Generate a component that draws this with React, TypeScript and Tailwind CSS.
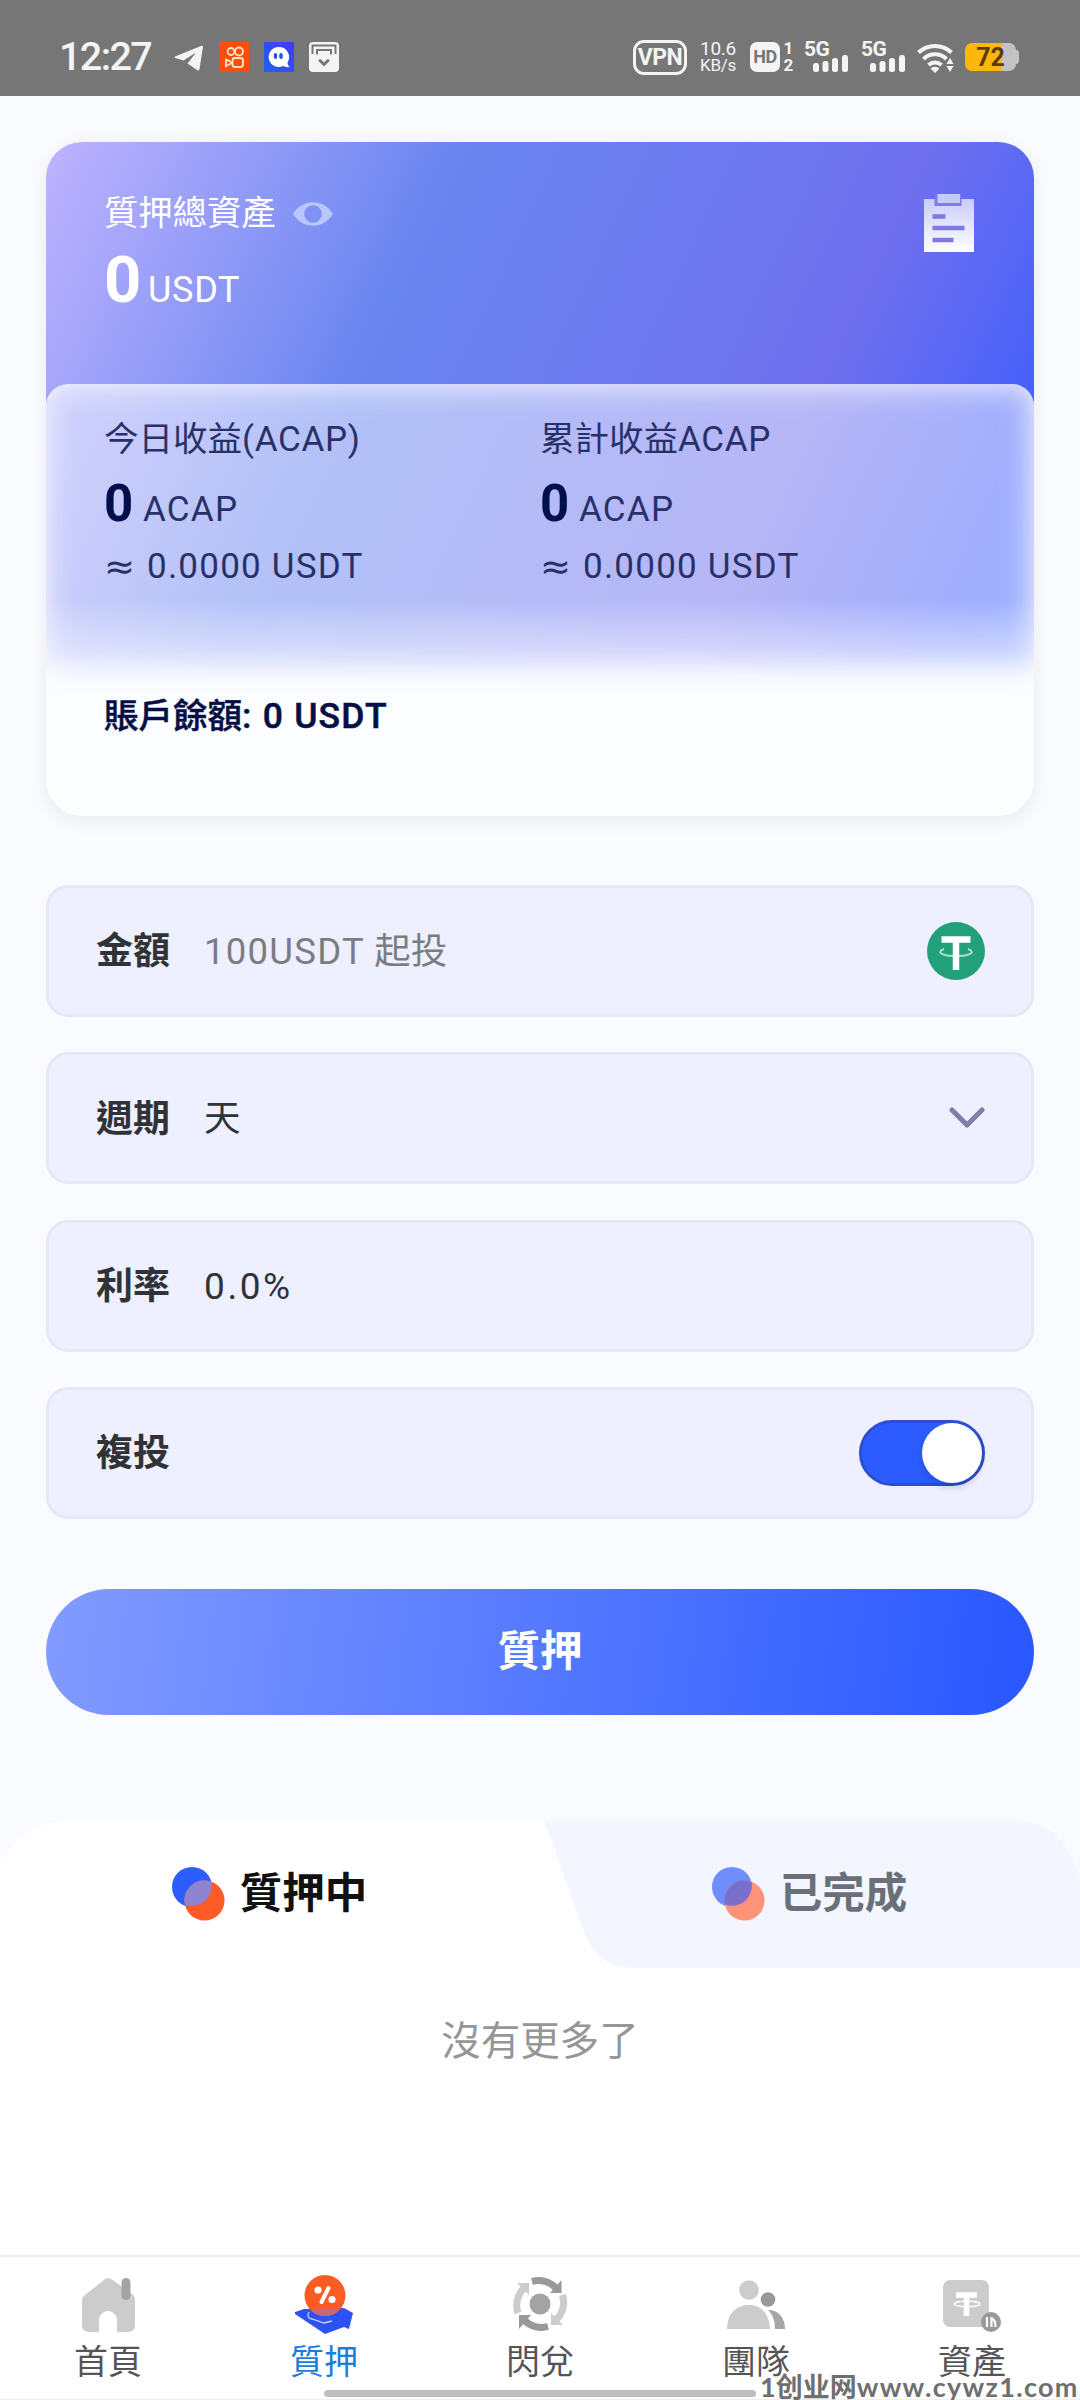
import { useState } from 'react';
import type { ReactNode } from 'react';

const FONT = 'font-[Roboto,"Noto_Sans_CJK_TC",sans-serif]';

/* ---------- status bar ---------- */

function SignalBars() {
  return (
    <div className="relative h-[30px] w-[45px]">
      <span className="absolute left-0 top-0 text-[21px] font-bold leading-[15px] -tracking-[0.5px]">5G</span>
      <svg className="absolute bottom-0 left-[9px]" width="36" height="17" viewBox="0 0 36 17" fill="#f4f4f4">
        <rect x="0" y="8" width="6" height="9" rx="2.5" />
        <rect x="9.5" y="6" width="6" height="11" rx="2.5" />
        <rect x="19" y="3" width="6" height="14" rx="2.5" />
        <rect x="29" y="0" width="6" height="17" rx="2.5" />
      </svg>
    </div>
  );
}

function StatusBar() {
  return (
    <div className="flex h-24 shrink-0 items-center bg-[#767676] pl-[59px] pr-[61px] pt-[18px] text-[#f4f4f4]">
      <span className="w-[115px] text-[39.5px] font-medium leading-none -tracking-[1.6px]">12:27</span>
      <svg width="30" height="30" viewBox="0 0 30 30" fill="#f4f4f4">
        <path d="M1 14.5 27 4c1.500-.6 2.200 0 1.900 1.500L25.500 27c-.3 1.500-1.200 1.800-2.400 1L13.500 21.500 22 10.500 9.500 18.500 1.500 16C.3 15.600.2 15 1 14.500Z" />
      </svg>
      <svg className="ml-[15px]" width="30" height="30" viewBox="0 0 30 30" fill="none" stroke="#ffe9c8" strokeWidth="1.800">
        <rect width="30" height="30" fill="#fb4d0b" stroke="none" />
        <circle cx="12" cy="9.500" r="3.500" />
        <circle cx="20" cy="9.500" r="4" />
        <rect x="13.500" y="16" width="10.500" height="9" rx="2.500" />
        <path d="M13 20.500 7 17.500v6.500l6-3" />
      </svg>
      <svg className="ml-[15px]" width="30" height="30" viewBox="0 0 30 30">
        <defs>
          <linearGradient id="ghost" x1="0" y1="1" x2="1" y2="0">
            <stop stopColor="#1d62e8" />
            <stop offset="1" stopColor="#4638ff" />
          </linearGradient>
        </defs>
        <rect width="30" height="30" fill="url(#ghost)" />
        <path d="M15 5a10 10 0 1 0 4 19c2 1 4 1.500 6.500 1-1.500-1.500-2-3-1.800-5A10 10 0 0 0 15 5Z" fill="#fff" />
        <ellipse cx="11.500" cy="14" rx="1.800" ry="3" fill="#2f50e8" />
        <ellipse cx="17" cy="14" rx="1.800" ry="3" fill="#2f50e8" />
      </svg>
      <svg className="ml-[15px]" width="30" height="30" viewBox="0 0 30 30" fill="none">
        <rect width="30" height="30" rx="4" fill="#f4f4f4" />
        <path d="M3.500 12V3.500h23V12M8 12.500V8h14v4.500" stroke="#767676" strokeWidth="2" />
        <path d="m11 18.500 4 4 4-4" stroke="#767676" strokeWidth="3" strokeLinecap="round" />
      </svg>

      <div className="ml-auto flex items-center">
        <span className="flex h-[35px] w-[54px] items-center justify-center rounded-[11px] border-[3px] border-[#f4f4f4] text-[23px] font-bold leading-none -tracking-[0.5px]">
          VPN
        </span>
        <div className="ml-[13px] flex w-9 flex-col items-center text-[19px] leading-[17px] -tracking-[0.3px]">
          <span>10.6</span>
          <span className="text-[17px]">KB/s</span>
        </div>
        <span className="ml-[14px] flex h-[30px] w-[30px] items-center justify-center rounded-[7px] bg-[#f4f4f4] text-[18px] font-bold leading-none -tracking-[0.5px] text-[#767676]">
          HD
        </span>
        <div className="ml-[3px] flex w-[11px] flex-col items-center text-[17px] font-bold leading-[17px]">
          <span>1</span>
          <span>2</span>
        </div>
        <div className="ml-[10px] flex gap-3">
          <SignalBars />
          <SignalBars />
        </div>
        <svg className="ml-[11px]" width="38" height="31" viewBox="0 0 38 31" fill="none" stroke="#f4f4f4" strokeWidth="4">
          <path d="M1.500 10.500a24 24 0 0 1 33 0M6.500 17a16.500 16.500 0 0 1 23 0M11.500 23a10 10 0 0 1 13 0" />
          <path d="M13.500 26.500a6.500 6.500 0 0 1 9 0L18 31Z" fill="#f4f4f4" stroke="none" />
          <path d="m33 16 3.500 6h-7ZM33 30l3.500-6h-7Z" fill="#f4f4f4" stroke="none" />
        </svg>
        <div className="ml-[10px] flex items-center">
          <span className="flex h-[28px] w-[51px] items-center justify-center rounded-[7px] bg-[linear-gradient(90deg,#ffb60d_72%,#c3c3c3_72%)] text-[25px] font-bold leading-none text-[#5b3c07]">
            72
          </span>
          <span className="h-[14px] w-[3px] rounded-r bg-[#c3c3c3]" />
        </div>
      </div>
    </div>
  );
}

/* ---------- asset card ---------- */

function Earnings({ label, unit }: { label: string; unit: string }) {
  return (
    <div className="w-[437px] text-[34.5px] text-[#283069]">
      <p className="h-[52px] leading-[52px]">
        {label}
        <span className="text-[35px] tracking-[0.02em]">{unit}</span>
      </p>
      <p className="mt-[14px] flex h-[50px] items-baseline leading-[50px]">
        <span className="w-[39px] text-[51px] font-bold text-[#030f4a]">0</span>
        <span className="text-[35px] tracking-[0.035em]">ACAP</span>
      </p>
      <p className="mt-[12px] flex h-[52px] items-center leading-[52px]">
        <span className="w-[43px] font-['DejaVu_Sans'] text-[37px]">≈</span>
        <span className="text-[35px] tracking-[0.035em]">0.0000 USDT</span>
      </p>
    </div>
  );
}

function AssetCard() {
  return (
    <section className="relative h-[674px] rounded-[36px] shadow-[0_4px_20px_rgba(0,0,0,0.07)]">
      <div className="flex h-[290px] justify-between rounded-t-[36px] bg-[linear-gradient(115deg,#bfb3ff_0%,#6985f0_34%,#7070ee_72%,#4560fb_91%,#3b66ff_100%)] bg-[length:988px_510px] bg-no-repeat pl-[58px] pr-[59px]">
        <div className="text-white">
          <div className="flex items-center gap-[17px] pt-[45px]">
            <span className="text-[34.3px] leading-[52px]">質押總資產</span>
            <svg className="mt-[2px]" width="40" height="24" viewBox="0 0 41 24" fill="#b7c6fb">
              <path fillRule="evenodd" d="M0 12C5 4 12 0 20.500 0S36 4 41 12c-5 8-12 12-20.500 12S5 20 0 12Zm20.500 9a9 9 0 1 0 0-18 9 9 0 0 0 0 18Z" />
            </svg>
          </div>
          <p className="mt-px flex items-baseline leading-[80px]">
            <span className="w-[44px] text-[65px] font-bold">0</span>
            <span className="text-[36px] tracking-[0.02em]">USDT</span>
          </p>
        </div>
        <svg className="mt-[52px]" width="51" height="59" viewBox="0 0 51 59">
          <defs>
            <linearGradient id="sheet" x1="0" y1="0" x2="0" y2="1">
              <stop stopColor="#c9ccfb" />
              <stop offset="1" stopColor="#fff" />
            </linearGradient>
          </defs>
          <path d="M0 5h50v53H0Z" fill="url(#sheet)" />
          <path d="M10.500 0h27v12h-27Z" fill="#7f7bea" />
          <path d="M13.500 0h22.500v9H13.500Z" fill="#c3cbf7" />
          <path d="M8.500 22.500h13M8.500 34h32M8.500 46h21" stroke="#7f79e3" strokeWidth="4.500" />
        </svg>
      </div>

      {/* frosted panel laid over the lower part of the gradient */}
      <div className="absolute inset-x-0 bottom-0 h-[432px] overflow-hidden rounded-t-[22px] rounded-b-[36px] bg-[#fcfdff]">
        <div className="absolute inset-x-0 top-0 h-[340px] [mask-image:linear-gradient(#000_215px,rgba(0,0,0,0.55)_265px,rgba(0,0,0,0.1)_295px,transparent_320px)]">
          <div className="h-[300px] bg-[linear-gradient(115deg,#bfb3ff_0%,#6985f0_34%,#7070ee_72%,#4560fb_91%,#3b66ff_100%)] bg-[length:988px_542px] bg-[position:0_-242px] opacity-50 blur-[15px]" />
        </div>
        <div className="relative px-[58px] pt-[29px]">
          <div className="flex">
            <Earnings label="今日收益" unit="(ACAP)" />
            <Earnings label="累計收益" unit="ACAP" />
          </div>
          <p className="mt-[97px] text-[34.5px] font-medium leading-[52px] text-[#050f45] [-webkit-text-stroke:0.5px_#050f45]">
            賬戶餘額<span className="text-[35.5px] tracking-[0.035em]">: 0 USDT</span>
          </p>
        </div>
      </div>
    </section>
  );
}

/* ---------- form ---------- */

function Field({ label, children, right }: { label: string; children?: ReactNode; right?: ReactNode }) {
  return (
    <div className="flex h-[132px] items-center rounded-[22px] border-[3px] border-[#e7e8f5] bg-[#eeefff] pl-[47px] pr-[46px] text-[36.5px] text-[#303336]">
      <span className="w-[108px] pt-[2px] text-[37px] font-bold">{label}</span>
      <span className="pt-[2px]">{children}</span>
      <span className="ml-auto">{right}</span>
    </div>
  );
}

function TetherIcon() {
  return (
    <svg width="58" height="58" viewBox="0 0 58 58" fill="none">
      <circle cx="29" cy="29" r="29" fill="#22a079" />
      <path d="M17 27c-8 3-3 7 12 7s20-4 12-7" stroke="#a9dccb" strokeWidth="2" />
      <path d="M14.500 17.500h29M29 17v31" stroke="#fff" strokeWidth="6.500" />
    </svg>
  );
}

function Toggle({ on, onToggle }: { on: boolean; onToggle: () => void }) {
  return (
    <button
      onClick={onToggle}
      className={`flex h-[66px] w-[126px] items-center rounded-full border-[3px] ${on ? 'justify-end border-[#2b4fce] bg-[#2c5cff]' : 'justify-start border-gray-300 bg-white'}`}
    >
      <span className="h-[60px] w-[60px] rounded-full bg-white shadow-[0_6px_6px_rgba(0,0,0,0.12)]" />
    </button>
  );
}

/* ---------- tabs ---------- */

function Dots({ active }: { active: boolean }) {
  return (
    <svg width="53" height="54" viewBox="0 0 53 54">
      <circle cx="20" cy="20" r="20" fill={active ? '#2d5cff' : '#6f8dfb'} />
      <circle cx="32.500" cy="33.500" r="20" fill={active ? '#fe5b26' : '#fe9379'} />
      <path d="M39.800 17A20 20 0 0 1 12.800 37.500 20 20 0 0 1 39.800 14.900Z" fill={active ? '#8f83cf' : '#7a70cb'} />
    </svg>
  );
}

function Tabs({ tab, setTab }: { tab: number; setTab: (i: number) => void }) {
  return (
    <div className="relative flex h-[148px] shrink-0">
      <svg className="absolute inset-0" width="1080" height="148" viewBox="0 0 1080 148">
        <path d="M0 42C18 12 42 0 80 0H1000V148H0Z" fill="#fff" />
        <path d="M544 0H1010C1050 0 1070 22 1080 60V148H630C606 146 592 134 584 112Z" fill="#f3f6ff" />
      </svg>
      {['質押中', '已完成'].map((name, i) => (
        <button
          key={name}
          onClick={() => setTab(i)}
          className={`relative flex w-1/2 items-center justify-center gap-[15px] pr-px text-[42.5px] font-bold ${tab === i ? 'text-[#111]' : 'text-[#6b6f7a]'}`}
        >
          <Dots active={tab === i} />
          <span>{name}</span>
        </button>
      ))}
    </div>
  );
}

/* ---------- bottom navigation ---------- */

const NAV = [
  {
    name: '首頁',
    icon: (
      <svg width="60" height="60" viewBox="0 0 60 60">
        <path d="M30 3q2 0 4 1.500L54 19q3 2 3 6v25q0 7-7 7H39V45a9 9 0 0 0-18 0v12H11q-7 0-7-7V26q0-4 3-6L26 5q2-2 4-2Z" fill="#ccc" />
        <rect x="43.500" y="3" width="9" height="22" rx="4.500" fill="#a3a3a3" />
      </svg>
    ),
  },
  {
    name: '質押',
    icon: (
      <svg width="60" height="60" viewBox="0 0 60 60">
        <path d="m1 37 9-3 40-1 9 5-4 16-5-2-19 7L1 39Z" fill="#2c51f4" />
        <path d="M15 37q-3 6 3 7l12 4 8-2" fill="none" stroke="#c9d3ff" strokeWidth="1.300" />
        <circle cx="31" cy="20.500" r="20.500" fill="#fe5a24" />
        <path d="M17 35.500q14-4 28 0-6 5.500-14 5.500t-14-5.500Z" fill="#c5697a" />
        <path d="m34.500 13-7 14" stroke="#fff" strokeWidth="4" strokeLinecap="round" />
        <circle cx="24" cy="15" r="3.600" fill="#fff" />
        <circle cx="38" cy="24.500" r="3.600" fill="#fff" />
      </svg>
    ),
  },
  {
    name: '閃兌',
    icon: (
      <svg width="60" height="60" viewBox="0 0 60 60" fill="none">
        <circle cx="30" cy="29" r="10.500" fill="#a3a3a3" />
        <path d="M22 6.500A24 24 0 0 1 46 13" stroke="#999" strokeWidth="7" />
        <path d="M51.500 5v13H40Z" fill="#999" />
        <path d="M38 51.500A24 24 0 0 1 14 45" stroke="#999" strokeWidth="7" />
        <path d="M9 54V40h12Z" fill="#999" />
        <path d="M8 38A24 24 0 0 1 14 13" stroke="#ccc" strokeWidth="7" />
        <path d="M7 8h12v12Z" fill="#ccc" />
        <path d="M52.500 20A24 24 0 0 1 46 45" stroke="#ccc" strokeWidth="7" />
        <path d="M53 50H41V38Z" fill="#ccc" />
      </svg>
    ),
  },
  {
    name: '團隊',
    icon: (
      <svg width="60" height="60" viewBox="0 0 60 60">
        <circle cx="23" cy="15" r="9.800" fill="#ccc" />
        <path d="M1 54C1 39 10 30 23 30s20 9 21 24Z" fill="#ccc" />
        <circle cx="42" cy="24.500" r="7.300" fill="#999" />
        <path d="M42 35c10 0 17 7 17 19H49c0-8-2-14-7-19Z" fill="#a6a6a6" />
      </svg>
    ),
  },
  {
    name: '資產',
    icon: (
      <svg width="60" height="60" viewBox="0 0 60 60" fill="none">
        <rect x="1" y="5" width="46" height="47" rx="7" fill="#ccc" />
        <path d="M14 20h21M24.500 20v21" stroke="#fff" strokeWidth="5.500" />
        <ellipse cx="25" cy="29" rx="13" ry="2.800" stroke="#fff" strokeWidth="1.300" />
        <circle cx="49" cy="47" r="10" fill="#999" />
        <path d="M45 42v10M49.500 42v10M49.500 44q4 0 4 8" stroke="#fff" strokeWidth="2.200" />
      </svg>
    ),
  },
];

function BottomNav({ current }: { current: number }) {
  return (
    <nav className="relative flex h-[145px] shrink-0 border-b border-t-2 border-[#efefef] bg-white">
      {NAV.map(({ name, icon }, i) => (
        <div
          key={name}
          className={`flex w-1/5 flex-col items-center pt-[18px] text-[34px] leading-[48px] ${i === current ? 'text-[#1c7ddb]' : 'text-[#555]'}`}
        >
          {icon}
          <span className="mt-[3px]">{name}</span>
        </div>
      ))}
      <div className="absolute bottom-[2px] left-[324px] h-[7px] w-[432px] rounded-full bg-[#bdbdbd]" />
      <span className="absolute left-[760px] top-[116px] whitespace-nowrap font-[Lato,'Noto_Sans_CJK_SC',sans-serif] text-[27px] font-bold leading-[28px] text-[#6f6f6f]">
        1创业网<span className="tracking-[1.3px]">www.cywz1.com</span>
      </span>
    </nav>
  );
}

export default function App() {
  const [compound, setCompound] = useState(true);
  const [tab, setTab] = useState(0);

  return (
    <div className={`flex h-[2400px] w-[1080px] flex-col overflow-hidden bg-[#f9fbff] ${FONT}`}>
      <StatusBar />

      <main className="px-[46px] pt-[46px]">
        <AssetCard />

        <div className="mt-[69px] flex flex-col gap-[35.3px]">
          <Field label="金額" right={<TetherIcon />}>
            <span className="text-[#7b7c82]">
              <span className="tracking-[0.035em]">100USDT</span> 起投
            </span>
          </Field>
          <Field
            label="週期"
            right={
              <svg width="36" height="22" viewBox="0 0 36 22" fill="none">
                <path d="m3 3 15 15L33 3" stroke="#7c80a6" strokeWidth="5" strokeLinecap="round" strokeLinejoin="round" />
              </svg>
            }
          >
            天
          </Field>
          <Field label="利率">
            <span className="text-[37px] tracking-[0.07em]">0.0%</span>
          </Field>
          <Field label="複投" right={<Toggle on={compound} onToggle={() => setCompound(!compound)} />} />
        </div>

        <button className="mt-[70px] h-[126px] w-full rounded-full bg-[linear-gradient(97deg,#829bff_0%,#2b59ff_97%)] text-[42.5px] font-bold text-white">
          質押
        </button>
      </main>

      <div className="mt-[105px] flex grow flex-col">
        <Tabs tab={tab} setTab={setTab} />
        <div className="grow bg-white pt-[45px] text-center text-[39.5px] leading-[58px] text-[#969696]">沒有更多了</div>
      </div>

      <BottomNav current={1} />
    </div>
  );
}
